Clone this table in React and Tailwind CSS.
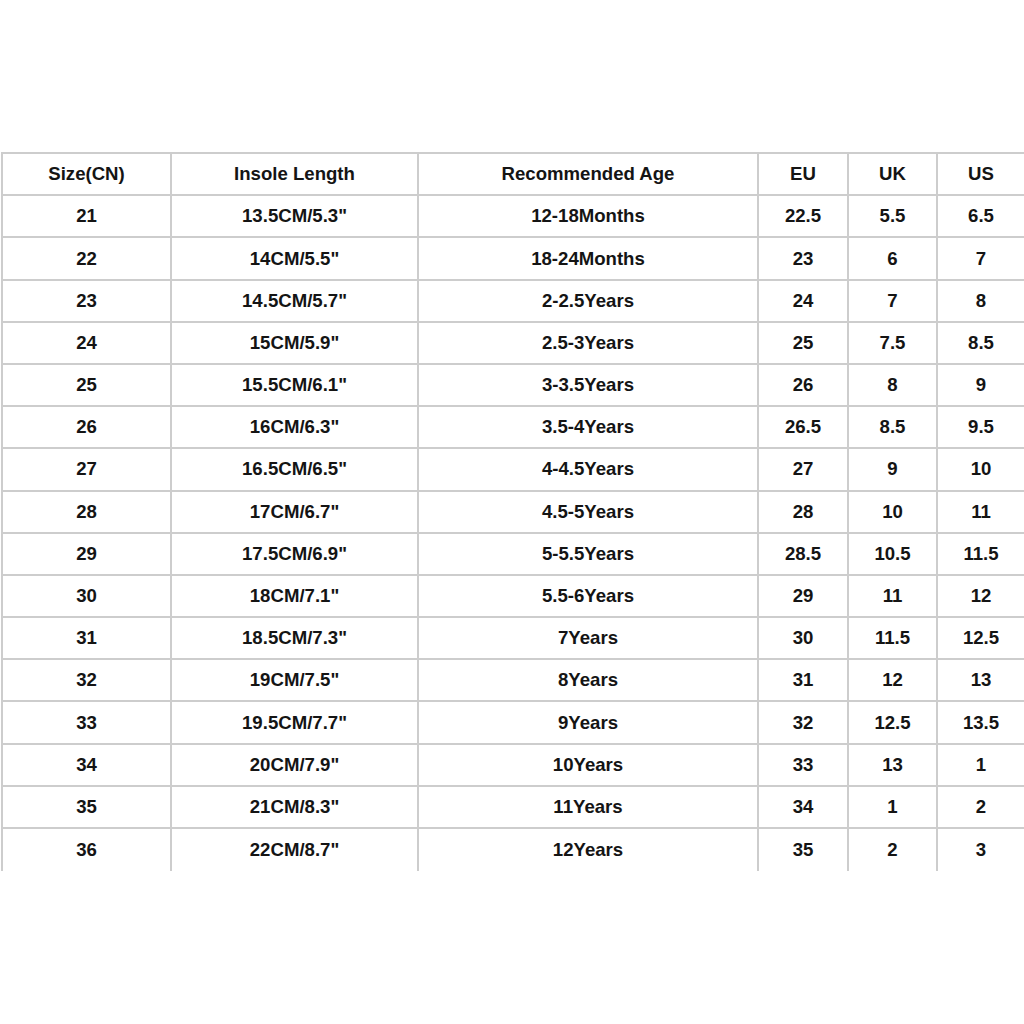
import React from 'react'

const headers = ['Size(CN)', 'Insole Length', 'Recommended Age', 'EU', 'UK', 'US']

const rows = [
  ['21', '13.5CM/5.3"', '12-18Months', '22.5', '5.5', '6.5'],
  ['22', '14CM/5.5"', '18-24Months', '23', '6', '7'],
  ['23', '14.5CM/5.7"', '2-2.5Years', '24', '7', '8'],
  ['24', '15CM/5.9"', '2.5-3Years', '25', '7.5', '8.5'],
  ['25', '15.5CM/6.1"', '3-3.5Years', '26', '8', '9'],
  ['26', '16CM/6.3"', '3.5-4Years', '26.5', '8.5', '9.5'],
  ['27', '16.5CM/6.5"', '4-4.5Years', '27', '9', '10'],
  ['28', '17CM/6.7"', '4.5-5Years', '28', '10', '11'],
  ['29', '17.5CM/6.9"', '5-5.5Years', '28.5', '10.5', '11.5'],
  ['30', '18CM/7.1"', '5.5-6Years', '29', '11', '12'],
  ['31', '18.5CM/7.3"', '7Years', '30', '11.5', '12.5'],
  ['32', '19CM/7.5"', '8Years', '31', '12', '13'],
  ['33', '19.5CM/7.7"', '9Years', '32', '12.5', '13.5'],
  ['34', '20CM/7.9"', '10Years', '33', '13', '1'],
  ['35', '21CM/8.3"', '11Years', '34', '1', '2'],
  ['36', '22CM/8.7"', '12Years', '35', '2', '3'],
]

function Row({ cells, last }) {
  return (
    <div className="grid h-[42.2px] grid-cols-[169px_247px_340px_90px_89px_1fr]">
      {cells.map((cell, i) => (
        <div
          key={i}
          className={
            'flex items-center justify-center border-[#cdcdcd] ' +
            (i < cells.length - 1 ? 'border-r-2 ' : '') +
            (last ? '' : 'border-b-2')
          }
        >
          {cell}
        </div>
      ))}
    </div>
  )
}

export default function App() {
  return (
    <div className="h-[1024px] w-[1024px] overflow-hidden bg-white font-['Liberation_Sans',Arial,sans-serif] text-[18.6px] font-bold text-[#141414]">
      <div className="ml-[1px] mt-[152px] border-l-2 border-t-2 border-[#cdcdcd]">
        <Row cells={headers} />
        {rows.map((r, i) => (
          <Row key={r[0]} cells={r} last={i === rows.length - 1} />
        ))}
      </div>
    </div>
  )
}
